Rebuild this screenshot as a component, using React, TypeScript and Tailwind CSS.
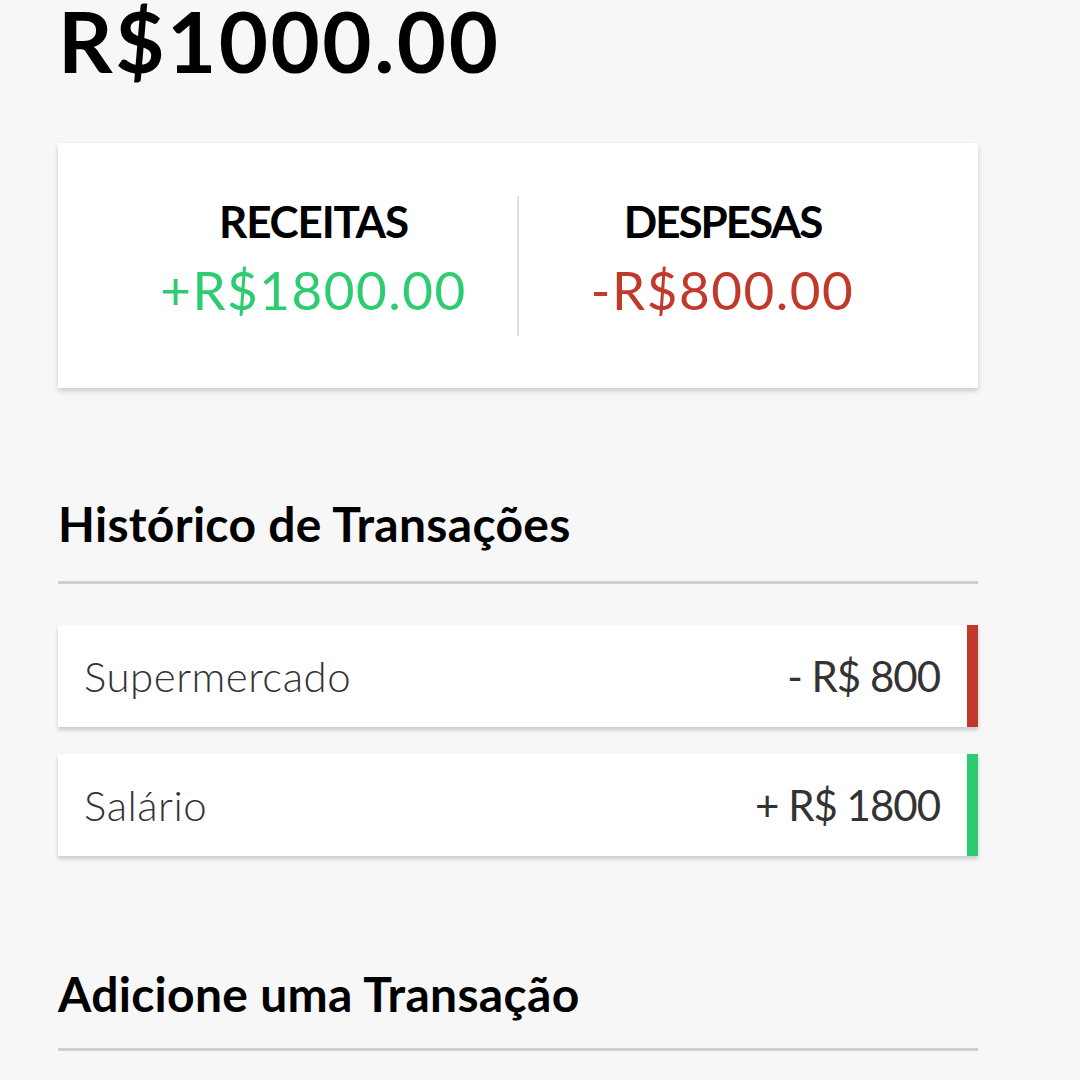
export default function App() {
  return (
    <div className="min-h-[1080px] w-[1080px] overflow-hidden bg-[#f7f7f7] font-['Lato',sans-serif] text-black">
      <div className="ml-[58px] w-[920px]">
        <h1 className="m-0 text-[85px] font-bold leading-[80px] tracking-[2.5px]">R$1000.00</h1>
        <div className="mt-[63px] flex h-[245px] items-center bg-white px-[52px] pb-[16px] shadow-[0_3px_5px_rgba(0,0,0,0.18)]">
          <div className="flex flex-1 flex-col items-center">
            <h4 className="text-[44px] font-bold uppercase leading-[50px] tracking-[-1.2px]">Receitas</h4>
            <p className="mt-[14px] text-[53px] leading-[60px] tracking-[1.5px] text-[#2ecc71]">+R$1800.00</p>
          </div>
          <div className="mt-[16px] h-[140px] w-[2px] bg-[#dedede]" />
          <div className="flex flex-1 flex-col items-center">
            <h4 className="text-[44px] font-bold uppercase leading-[50px] tracking-[-2px]">Despesas</h4>
            <p className="mt-[14px] text-[53px] leading-[60px] tracking-[1.5px] text-[#c0392b]">-R$800.00</p>
          </div>
        </div>
        <h3 className="mt-[108px] text-[48px] font-bold leading-[56px] tracking-[0.3px]">Histórico de Transações</h3>
        <div className="mt-[29px] h-[3px] bg-[#cfcfcf]" />
        <ul className="mt-[41px] flex flex-col gap-[27px]">
          <li className="flex h-[102px] items-center justify-between border-r-[11px] border-[#c0392b] bg-white pl-[26px] pr-[27px] text-[#333] shadow-[0_3px_4px_rgba(0,0,0,0.18)]">
            <span className="text-[42px] font-light tracking-[0.5px]">Supermercado</span>
            <span className="text-[42px] tracking-[-1px]">- R$ 800</span>
          </li>
          <li className="flex h-[102px] items-center justify-between border-r-[11px] border-[#2ecc71] bg-white pl-[26px] pr-[27px] text-[#333] shadow-[0_3px_4px_rgba(0,0,0,0.18)]">
            <span className="text-[42px] font-light tracking-[0.5px]">Salário</span>
            <span className="text-[42px] tracking-[-1px]">+ R$ 1800</span>
          </li>
        </ul>
        <h3 className="mt-[110px] text-[48px] font-bold leading-[56px] tracking-[0.3px]">Adicione uma Transação</h3>
        <div className="mt-[26px] h-[3px] bg-[#cfcfcf]" />
      </div>
    </div>
  );
}
